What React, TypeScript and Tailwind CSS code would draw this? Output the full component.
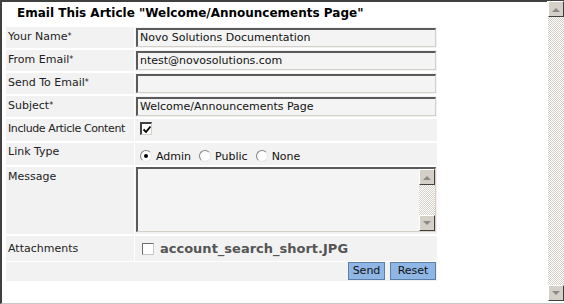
import React from 'react';

const font = { fontFamily: '"DejaVu Sans", Verdana, sans-serif' };

const ScrollBtn = ({ dir }: { dir: 'up' | 'down' }) => (
  <div className="w-[16px] h-[16px] bg-[#d4d0c8] border-t border-l border-t-white border-l-white border-b border-r border-b-[#404040] border-r-[#404040] flex items-center justify-center">
    <svg width="8" height="5" viewBox="0 0 8 5">
      {dir === 'up' ? <path d="M0 5 L4 1 L8 5 Z" fill="#8a8a8a" /> : <path d="M0 0 L8 0 L4 4 Z" fill="#8a8a8a" />}
    </svg>
  </div>
);

const Scrollbar = ({ className }: { className: string }) => (
  <div
    className={`flex flex-col justify-between bg-[repeating-conic-gradient(#d4d0c8_0_25%,#ffffff_0_50%)] bg-[length:2px_2px] ${className}`}
  >
    <ScrollBtn dir="up" />
    <ScrollBtn dir="down" />
  </div>
);

const Label = ({ text, req, className = '' }: { text: string; req?: boolean; className?: string }) => (
  <div className={`bg-[#f2f2f2] pl-[2px] text-[11px] text-[#222] whitespace-nowrap leading-[14px] ${className}`}>
    {text}
    {req && <sup className="text-[8px] relative -top-[1px]">*</sup>}
  </div>
);

const Field = ({ value }: { value: string }) => (
  <div className="bg-[#f2f2f2] flex items-center pl-[1px]">
    <div className="w-[300px] h-[19px] bg-[#f4f4f4] border-t-2 border-l-2 border-t-[#5a5a5a] border-l-[#5a5a5a] border-b border-r border-b-[#d4d0c8] border-r-[#d4d0c8] text-[11px] text-[#111] pl-[2px] leading-[16px]">
      {value}
    </div>
  </div>
);

const Radio = ({ checked, label }: { checked?: boolean; label: string }) => (
  <div className="flex items-center gap-[4px]">
    <div className="w-[12px] h-[12px] rounded-full bg-white border border-[#808080] border-r-[#e6e6e6] border-b-[#e6e6e6] flex items-center justify-center">
      {checked && <div className="w-[4px] h-[4px] rounded-full bg-black" />}
    </div>
    <span className="text-[11px] text-[#111] mt-[3px] leading-[14px]">{label}</span>
  </div>
);

export default function App() {
  return (
    <div className="w-[564px] h-[304px] relative overflow-hidden bg-white" style={font}>
      <div className="absolute inset-0 border-t-2 border-l-2 border-t-[#404040] border-l-[#404040] border-b border-b-[#c8c8c8]" />
      <Scrollbar className="absolute right-0 top-[1px] w-[17px] h-[300px] border-l border-l-white" />

      <div className="pt-[5px] pl-[6px]">
        <h1 className="text-[12px] font-bold text-black pl-[11px] leading-[17px]">
          Email This Article "Welcome/Announcements Page"
        </h1>

        <div className="mt-[5px] grid grid-cols-[128px_302px] gap-x-[1px] gap-y-[2px]">
          <Label text="Your Name" req className="pt-[3px] h-[21px]" />
          <Field value="Novo Solutions Documentation" />

          <Label text="From Email" req className="pt-[3px] h-[21px]" />
          <Field value="ntest@novosolutions.com" />

          <Label text="Send To Email" req className="pt-[3px] h-[21px]" />
          <Field value="" />

          <Label text="Subject" req className="pt-[3px] h-[21px]" />
          <Field value="Welcome/Announcements Page" />

          <Label text="Include Article Content" className="pt-[3px] h-[22px] tracking-[-0.4px]" />
          <div className="bg-[#f2f2f2] pl-[5px] pt-[3px]">
            <div className="w-[12px] h-[13px] bg-white border-t-2 border-l-2 border-t-[#404040] border-l-[#404040] border-b border-r border-b-[#d4d0c8] border-r-[#d4d0c8] flex items-center justify-center">
              <svg width="8" height="7" viewBox="0 0 8 7">
                <path d="M0.5 3.5 L3 6 L7.5 0.5" stroke="#000" strokeWidth="1.8" fill="none" />
              </svg>
            </div>
          </div>

          <Label text="Link Type" className="pt-[2px] h-[22px]" />
          <div className="bg-[#f2f2f2] pl-[5px] pt-[4px] flex items-start gap-[8px]">
            <Radio checked label="Admin" />
            <Radio label="Public" />
            <Radio label="None" />
          </div>

          <Label text="Message" className="pt-[3px] h-[67px]" />
          <div className="bg-[#f2f2f2] pl-[1px]">
            <div className="w-[300px] h-[65px] bg-[#f4f4f4] border-t-2 border-l-2 border-t-[#5a5a5a] border-l-[#5a5a5a] border-b border-r border-b-[#d4d0c8] border-r-[#d4d0c8] flex justify-end">
              <Scrollbar className="w-[16px] h-full" />
            </div>
          </div>

          <Label text="Attachments" className="pt-[6px] h-[25px]" />
          <div className="bg-[#f2f2f2] pl-[7px] flex items-center gap-[6px]">
            <div className="w-[12px] h-[12px] bg-white border border-[#6e6e6e] border-r-[#c8c8c8] border-b-[#c8c8c8]" />
            <span className="text-[13px] font-bold text-[#555] leading-[16px]">account_search_short.JPG</span>
          </div>

          <div className="col-span-2 bg-[#f2f2f2] h-[19px] flex justify-end items-start gap-[5px] pr-[1px] -mt-[1px]">
            <button className="h-[18px] w-[37px] bg-[#8fb6e4] border border-[#5a7fa8] text-[11px] text-[#111] leading-[16px]">
              Send
            </button>
            <button className="h-[18px] w-[46px] bg-[#8fb6e4] border border-[#5a7fa8] text-[11px] text-[#111] leading-[16px]">
              Reset
            </button>
          </div>
        </div>
      </div>
    </div>
  );
}
